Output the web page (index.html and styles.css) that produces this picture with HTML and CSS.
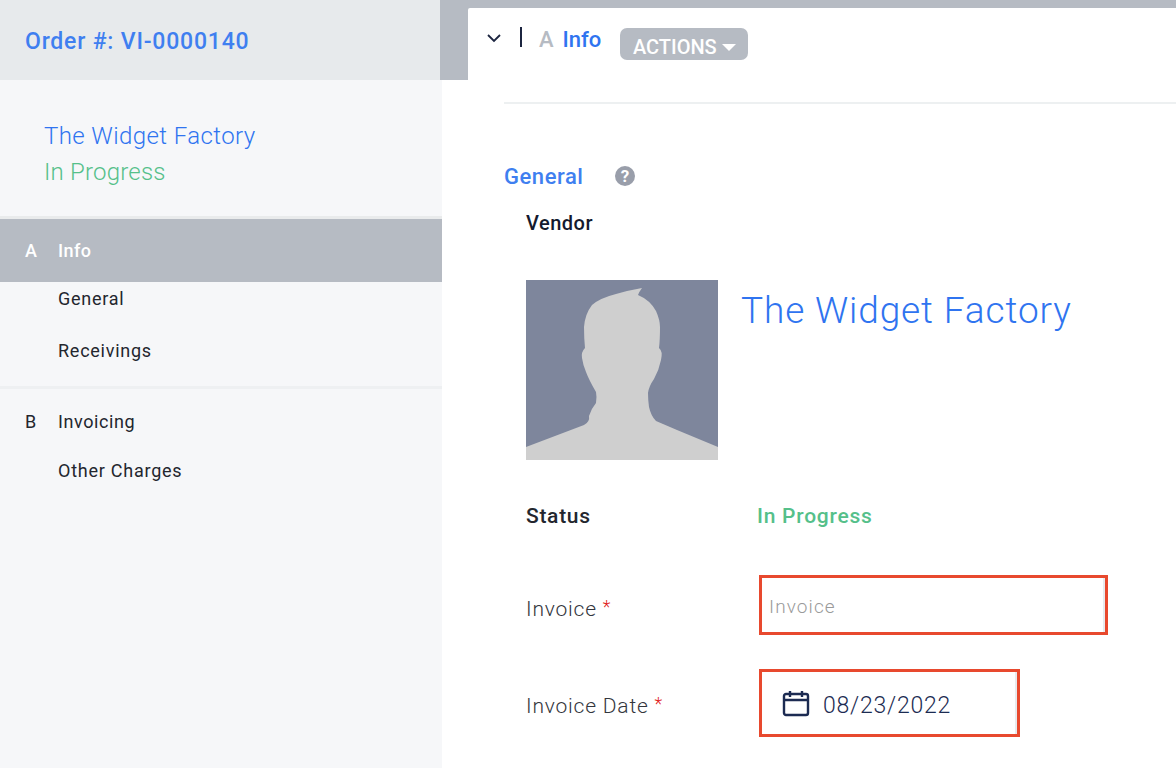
FILE: index.html
```html
<!DOCTYPE html>
<html lang="en">
<head>
  <meta name="viewport" content="width=device-width, initial-scale=1.0">
  <meta charset="UTF-8">
  <title>Order VI-0000140</title>
  <link rel="stylesheet" href="styles.css">
</head>
<body>
  <div class="layout">
    <!-- Sidebar -->
    <aside class="sidebar">
      <div class="order-head">Order #: VI-0000140</div>
      <div class="order-summary">
        <div class="summary-vendor">The Widget Factory</div>
        <div class="summary-status">In Progress</div>
      </div>
      <nav class="steps">
        <div class="step step-active"><span class="step-letter">A</span>Info</div>
        <div class="sub-step sub-general">General</div>
        <div class="sub-step sub-receivings">Receivings</div>
        <div class="step step-b"><span class="step-letter">B</span>Invoicing</div>
        <div class="sub-step sub-charges">Other Charges</div>
      </nav>
    </aside>

    <main class="main">
      <div class="topbar">
        <div class="topbar-inner">
          <svg class="chevron" width="16" height="10" viewBox="0 0 16 10">
            <path d="M2 2l6 6 6-6" fill="none" stroke="#1c2540" stroke-width="1.8"/>
          </svg>
          <span class="bar"></span>
          <span class="crumb-letter">A</span>
          <span class="crumb-title">Info</span>
          <button class="actions-btn">ACTIONS<span class="caret"></span></button>
        </div>
      </div>

      <div class="content">
        <div class="section-head">
          <span class="section-title">General</span>
          <span class="help">?</span>
        </div>
        <div class="vendor-label">Vendor</div>
        <div class="vendor">
          <svg class="avatar" width="192" height="180" viewBox="0 0 192 180">
            <rect width="192" height="180" fill="#7e869c"/>
            <path fill="#cfcfcf" d="M0 167L58 145Q64 142 63 136 65 129 70 123 71 117 70 112 63 100 60 92 57 85 56 78 55 72 59 68 58 58 58 47 59 34 66 25 74 18 90 14 104 10 116 8 113 12 112 15 124 20 130 31 134 40 134 47 134 60 133 68 137 71 135 80 133 90 128 99 123 106 122 113 122 120 123 127 125 136 130 141L151 150 192 167V180H0Z"/>
          </svg>
          <div class="vendor-name">The Widget Factory</div>
        </div>

        <div class="row row-status">
          <div class="row-label strong">Status</div>
          <div class="status-value">In Progress</div>
        </div>
        <div class="row row-invoice">
          <div class="row-label">Invoice <span class="req">*</span></div>
          <div class="mark mark-invoice">
            <input class="text-input" type="text" placeholder="Invoice">
          </div>
        </div>
        <div class="row row-date">
          <div class="row-label">Invoice Date <span class="req">*</span></div>
          <div class="mark mark-date">
            <svg class="cal" width="28" height="28" viewBox="0 0 28 28" fill="none" stroke="#1c2b52" stroke-width="2.4">
              <rect x="2" y="5" width="24" height="21" rx="2"/>
              <path d="M2 11h24M8 2v6M20 2v6"/>
            </svg>
            <span class="date-value">08/23/2022</span>
          </div>
        </div>
      </div>
    </main>
  </div>
</body>
</html>
```

FILE: styles.css
```css
/* RESET */
* {
  margin: 0;
  padding: 0;
  box-sizing: border-box;
  font-family: Roboto, "Liberation Sans", sans-serif;
}

html, body {
  height: 100%;
  overflow: hidden;
  background-color: #fff;
}

.layout {
  display: flex;
  height: 768px;
}

/* SIDEBAR */
.sidebar {
  width: 442px;
  flex-shrink: 0;
  background-color: #f6f7f9;
}

.order-head {
  width: 440px;
  height: 80px;
  padding-left: 25px;
  line-height: 83px;
  background-color: #e7eaec;
  color: #3f7ff0;
  font-size: 23px;
  font-weight: 500;
  letter-spacing: 0.8px;
}

.order-summary {
  height: 139px;
  padding: 38px 0 0 44px;
  border-bottom: 3px solid #e9ebec;
  font-size: 24px;
  font-weight: 300;
  line-height: 36px;
}

.summary-vendor {
  color: #2f74f0;
  letter-spacing: 0.4px;
}

.summary-status {
  color: #55c08a;
  letter-spacing: 0.2px;
}

.step {
  display: flex;
  align-items: center;
  font-size: 18px;
  color: #23262e;
  letter-spacing: 0.6px;
}

.step-letter {
  width: 58px;
  padding-left: 25px;
}

.step-active {
  height: 63px;
  background-color: #b6bbc3;
  color: #fff;
  font-weight: 500;
  letter-spacing: 0.4px;
}

.step-b {
  height: 67px;
  border-top: 3px solid #eef0f2;
}

.sub-step {
  padding-left: 58px;
  font-size: 18px;
  color: #23262e;
  line-height: 24px;
  letter-spacing: 0.75px;
}

.sub-general {
  padding-top: 5px;
}

.sub-receivings {
  padding-top: 28px;
  padding-bottom: 23px;
}

.sub-charges {
  padding-top: 6px;
}

/* MAIN */
.main {
  flex: 1;
  margin-left: -2px;
  min-width: 0;
}

.topbar {
  height: 80px;
  padding: 8px 0 0 28px;
  background-color: #b6bbc3;
}

.topbar-inner {
  position: relative;
  display: flex;
  align-items: flex-start;
  height: 72px;
  background-color: #fff;
  border-top-left-radius: 2px;
}

.chevron {
  margin: 25px 0 0 18px;
}

.bar {
  width: 2px;
  height: 20px;
  margin: 19px 0 0 18px;
  background-color: #1c2540;
}

.crumb-letter {
  margin: 18px 0 0 17px;
  font-size: 22px;
  font-weight: 500;
  line-height: 28px;
  color: #b6bbc3;
}

.crumb-title {
  margin: 18px 0 0 9px;
  font-size: 22px;
  font-weight: 500;
  line-height: 28px;
  color: #2f74f0;
}

.actions-btn {
  display: flex;
  align-items: center;
  justify-content: center;
  gap: 5px;
  width: 128px;
  height: 32px;
  margin: 20px 0 0 19px;
  padding-top: 5px;
  border: none;
  border-radius: 7px;
  background-color: #b6bbc3;
  color: #fff;
  font-size: 20px;
  font-weight: 500;
}

.caret {
  width: 0;
  height: 0;
  margin-top: 1px;
  border-left: 7px solid transparent;
  border-right: 7px solid transparent;
  border-top: 7px solid #fff;
}

.content {
  margin: 22px 0 0 64px;
  border-top: 2px solid #edf0f1;
}

.section-head {
  display: flex;
  align-items: center;
  height: 28px;
  margin-top: 58px;
}

.section-title {
  width: 111px;
  font-size: 22px;
  font-weight: 500;
  color: #3f7ff0;
  letter-spacing: 0.55px;
}

.help {
  width: 20px;
  height: 20px;
  border-radius: 50%;
  background-color: #999eaa;
  color: #fff;
  font-size: 17px;
  font-weight: 700;
  line-height: 20px;
  text-align: center;
}

.vendor-label {
  margin: 21px 0 0 22px;
  font-size: 20px;
  font-weight: 500;
  line-height: 24px;
  color: #141a2e;
  letter-spacing: 0.5px;
}

.vendor {
  display: flex;
  align-items: flex-start;
  margin: 45px 0 0 22px;
}

.avatar {
  display: block;
}

.vendor-name {
  margin: 7px 0 0 23px;
  font-size: 37px;
  font-weight: 300;
  line-height: 48px;
  color: #2f74f0;
  letter-spacing: 0.87px;
}

.row {
  display: flex;
  align-items: center;
  padding-left: 22px;
}

.row-label {
  width: 233px;
  font-size: 21px;
  font-weight: 300;
  color: #33363d;
  letter-spacing: 0.8px;
}

.row-label.strong {
  width: 231px;
  font-weight: 500;
  color: #23262e;
  letter-spacing: 0.7px;
}

.row-invoice .row-label {
  padding-top: 7px;
}

.row-date .row-label {
  padding-top: 5px;
}

.req {
  color: #e02020;
  font-size: 18px;
  vertical-align: 3px;
  letter-spacing: 0;
}

.row-status {
  height: 40px;
  margin-top: 36px;
}

.status-value {
  font-size: 21px;
  font-weight: 500;
  color: #55c08a;
  letter-spacing: 0.75px;
}

.row-invoice {
  margin-top: 39px;
}

.row-date {
  margin-top: 34px;
}

/* MARCAS ROJAS */
.mark {
  border: 3px solid #e8492e;
  background-color: #fff;
}

.mark-invoice {
  width: 349px;
  height: 60px;
}

.text-input {
  display: block;
  width: 343px;
  height: 54px;
  padding: 2px 0 0 7px;
  border: none;
  border-right: 2px solid #e8eaed;
  outline: none;
  font-size: 19px;
  font-weight: 300;
  letter-spacing: 1.1px;
}

.text-input::placeholder {
  color: #9a9a9a;
  opacity: 1;
}

.mark-date {
  display: flex;
  align-items: center;
  gap: 13px;
  width: 261px;
  height: 68px;
  padding-left: 20px;
  box-shadow: inset -2px 0 0 #e8eaed;
}

.date-value {
  padding-top: 4px;
  font-size: 23px;
  font-weight: 300;
  color: #1c2b52;
  letter-spacing: 0.78px;
}
```
